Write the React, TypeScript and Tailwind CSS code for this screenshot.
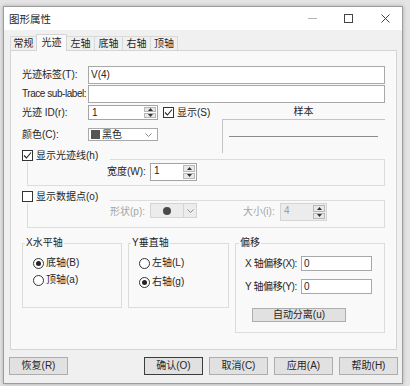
import React from "react";

const Tri = ({ up }: { up?: boolean }) => (
  <svg width="5" height="3" viewBox="0 0 5 3">
    <path d={up ? "M0 3L2.5 0L5 3Z" : "M0 0L2.5 3L5 0Z"} fill="#333" />
  </svg>
);

const Chevron = () => (
  <svg width="7" height="4" viewBox="0 0 7 4">
    <path d="M0.5 0.5L3.5 3.5L6.5 0.5" fill="none" stroke="#8a8a8a" strokeWidth="1" />
  </svg>
);

const Spin = ({ value, className, disabled }: { value: string; className: string; disabled?: boolean }) => (
  <div
    className={`flex border ${
      disabled ? "border-[#d4d4d4] bg-[#ececec] text-[#9c9c9c]" : "border-[#a4a4a4] bg-white text-[#222]"
    } ${className}`}
  >
    <div className="flex-1 pl-[3px] pt-[1px] leading-[12px]">{value}</div>
    <div className="flex w-[14px] flex-col gap-px p-px">
      <div className="flex flex-1 items-center justify-center border border-[#b8b8b8] bg-[#e8e8e8]">
        <Tri up />
      </div>
      <div className="flex flex-1 items-center justify-center border border-[#b8b8b8] bg-[#e8e8e8]">
        <Tri />
      </div>
    </div>
  </div>
);

const Check = ({ checked }: { checked?: boolean }) => (
  <div className="flex h-[11px] w-[11px] shrink-0 items-center justify-center border border-[#333] bg-white">
    {checked && (
      <svg width="9" height="9" viewBox="0 0 9 9">
        <path d="M1 4.5L3.5 7L8 1.5" fill="none" stroke="#222" strokeWidth="1.1" />
      </svg>
    )}
  </div>
);

const Radio = ({ on, label }: { on?: boolean; label: string }) => (
  <div className="flex h-[14px] items-center">
    <div className="flex h-[11px] w-[11px] items-center justify-center rounded-full border border-[#333] bg-white">
      {on && <div className="h-[5px] w-[5px] rounded-full bg-[#222]" />}
    </div>
    <span className="ml-[2px] leading-[14px]">{label}</span>
  </div>
);

const Btn = ({ label, className }: { label: string; className: string }) => (
  <div className={`flex h-[18px] w-[59px] items-center justify-center bg-[#e1e1e1] leading-[14px] ${className}`}>
    {label}
  </div>
);

export default function App() {
  const tabs = [
    { t: "常规", w: "w-[27px]" },
    { t: "光迹", w: "w-[31px]", on: true },
    { t: "左轴", w: "w-[29px]" },
    { t: "底轴", w: "w-[29px]" },
    { t: "右轴", w: "w-[29px]" },
    { t: "顶轴", w: "w-[28px]" },
  ];

  return (
    <div className="h-[386px] w-[410px] overflow-hidden whitespace-nowrap bg-[#e4e4e4] pl-[3px] pt-[6px] font-['Liberation_Sans','Noto_Sans_CJK_SC',sans-serif] text-[10px] text-[#262626]">
      <div className="flex h-[378px] w-[400px] flex-col border border-[#9c9c9c] bg-[#f0f0f0] shadow-[0_0_4px_rgba(0,0,0,0.25)]">
        {/* title bar */}
        <div className="flex h-[23px] items-center bg-white pl-[5px] pr-[12px]">
          <span className="text-[10.5px] leading-[14px]">图形属性</span>
          <div className="ml-auto flex items-center">
            <div className="h-px w-[9px] bg-[#b4b4b4]" />
            <div className="ml-[27px] h-[9px] w-[9px] border border-[#444]" />
            <svg className="ml-[28px]" width="9" height="9" viewBox="0 0 9 9">
              <path d="M0.5 0.5L8.5 8.5M8.5 0.5L0.5 8.5" stroke="#444" strokeWidth="1" />
            </svg>
          </div>
        </div>

        {/* tabs */}
        <div className="ml-[6px] mt-[4px] flex h-[16px] items-end">
          {tabs.map((tab, i) =>
            tab.on ? (
              <div
                key={i}
                className={`relative z-10 -mb-px -ml-px flex h-[17px] items-center justify-center border border-b-0 border-[#d4d4d4] bg-[#f9f9f9] leading-[14px] ${tab.w}`}
              >
                {tab.t}
              </div>
            ) : (
              <div
                key={i}
                className={`flex h-[14px] items-center justify-center border border-b-0 border-[#d9d9d9] bg-[#f0f0f0] leading-[13px] ${i > 0 ? "-ml-px" : ""} ${tab.w}`}
              >
                {tab.t}
              </div>
            )
          )}
        </div>

        {/* tab panel */}
        <div className="ml-[6px] flex h-[300px] w-[387px] flex-col border border-[#d4d4d4] bg-[#f9f9f9] pl-[11px] pr-[11px]">
          <div className="mt-[15px] flex h-[18px] items-center">
            <span className="w-[66px] leading-[14px]">光迹标签(T):</span>
            <div className="h-full flex-1 border border-[#a8a8a8] bg-white pl-[2px] pt-px leading-[14px]">V(4)</div>
          </div>
          <div className="mt-[1px] flex h-[18px] items-center">
            <span className="w-[66px] tracking-[-0.45px] leading-[14px]">Trace sub-label:</span>
            <div className="h-full flex-1 border border-[#a8a8a8] bg-white" />
          </div>

          <div className="mt-[2px] flex">
            <div className="w-[200px]">
              <div className="flex h-[15px] items-center">
                <span className="w-[66px] leading-[14px]">光迹 ID(r):</span>
                <Spin value="1" className="h-[15px] w-[70px]" />
                <div className="ml-[5px]">
                  <Check checked />
                </div>
                <span className="ml-[3px] leading-[14px]">显示(S)</span>
              </div>
              <div className="mt-[8px] flex h-[13px] items-center">
                <span className="w-[66px] leading-[14px]">颜色(C):</span>
                <div className="flex h-[13px] w-[70px] items-center border border-[#a8a8a8] bg-white pl-[2px] pr-[5px]">
                  <div className="h-[9px] w-[9px] bg-[#555]" />
                  <span className="ml-[2px] leading-[12px]">黑色</span>
                  <div className="ml-auto">
                    <Chevron />
                  </div>
                </div>
              </div>
            </div>
            <div className="w-[163px]">
              <div className="h-[14px] text-center leading-[14px]">样本</div>
              <div className="h-[34px] border-l border-t border-[#c4c4c4] pl-[6px] pr-[7px] pt-[16px]">
                <div className="h-px bg-[#8c8c8c]" />
              </div>
            </div>
          </div>

          {/* show trace line */}
          <div className="relative z-10 -mt-[4px] flex h-[13px] w-fit items-center bg-[#f9f9f9] pr-[12px]">
            <Check checked />
            <span className="ml-[3px] leading-[14px]">显示光迹线(h)</span>
          </div>
          <div className="-mt-[3px] ml-[5px] flex h-[27px] items-start border border-[#dcdcdc] pl-[79px] pt-[3px]">
            <span className="mt-[2px] w-[43px] leading-[14px]">宽度(W):</span>
            <Spin value="1" className="h-[18px] w-[47px]" />
          </div>

          {/* show data points */}
          <div className="relative z-10 mt-[4px] flex h-[13px] w-fit items-center bg-[#f9f9f9] pr-[12px]">
            <Check />
            <span className="ml-[3px] leading-[14px]">显示数据点(o)</span>
          </div>
          <div className="-mt-[3px] ml-[5px] flex h-[28px] items-start border border-[#dcdcdc] pl-[82px] pt-[2px] text-[#a4a4a4]">
            <span className="mt-[2px] w-[40px] leading-[14px]">形状(p):</span>
            <div className="flex h-[15px] w-[47px] items-center border border-[#d4d4d4] bg-[#ececec]">
              <div className="flex w-[32px] justify-center">
                <div className="h-[8px] w-[8px] rounded-full bg-[#4a4a4a]" />
              </div>
              <div className="flex h-full flex-1 items-center justify-center border-l border-[#d4d4d4]">
                <Chevron />
              </div>
            </div>
            <span className="ml-[46px] mt-[2px] w-[37px] leading-[14px]">大小(i):</span>
            <Spin value="4" className="h-[18px] w-[47px]" disabled />
          </div>

          {/* axis & offset groups */}
          <div className="mt-[8px] flex items-start">
            <fieldset className="h-[72px] w-[100px] border border-[#dcdcdc]">
              <legend className="ml-[2px] px-[1px] leading-[14px]">X水平轴</legend>
              <div className="mt-[6px] flex flex-col gap-[3px] pl-[10px]">
                <Radio on label="底轴(B)" />
                <Radio label="顶轴(a)" />
              </div>
            </fieldset>
            <fieldset className="ml-[6px] h-[72px] w-[101px] border border-[#dcdcdc]">
              <legend className="ml-[2px] px-[1px] leading-[14px]">Y垂直轴</legend>
              <div className="mt-[6px] flex flex-col gap-[5px] pl-[10px]">
                <Radio label="左轴(L)" />
                <Radio on label="右轴(g)" />
              </div>
            </fieldset>
            <fieldset className="ml-[6px] h-[97px] w-[150px] border border-[#dcdcdc]">
              <legend className="ml-[3px] px-[1px] leading-[14px]">偏移</legend>
              <div className="pl-[9px]">
                <div className="mt-[6px] flex h-[15px] items-center">
                  <span className="w-[56px] tracking-[-0.4px] leading-[14px]">X 轴偏移(X):</span>
                  <div className="h-full w-[71px] border border-[#a8a8a8] bg-white pl-[2px] leading-[13px]">0</div>
                </div>
                <div className="mt-[8px] flex h-[15px] items-center">
                  <span className="w-[56px] tracking-[-0.4px] leading-[14px]">Y 轴偏移(Y):</span>
                  <div className="h-full w-[71px] border border-[#a8a8a8] bg-white pl-[2px] leading-[13px]">0</div>
                </div>
                <div className="ml-[7px] mt-[14px] flex h-[14px] w-[94px] items-center justify-center border border-[#adadad] bg-[#e1e1e1] leading-[12px]">
                  自动分离(u)
                </div>
              </div>
            </fieldset>
          </div>
        </div>

        {/* bottom buttons */}
        <div className="mt-[7px] flex pl-[5px] pr-[4px]">
          <Btn label="恢复(R)" className="border border-[#adadad]" />
          <div className="ml-auto flex gap-[6px]">
            <Btn label="确认(O)" className="border border-[#3c3c3c]" />
            <Btn label="取消(C)" className="border border-[#adadad]" />
            <Btn label="应用(A)" className="border border-[#adadad]" />
            <Btn label="帮助(H)" className="border border-[#adadad]" />
          </div>
        </div>
      </div>
    </div>
  );
}
